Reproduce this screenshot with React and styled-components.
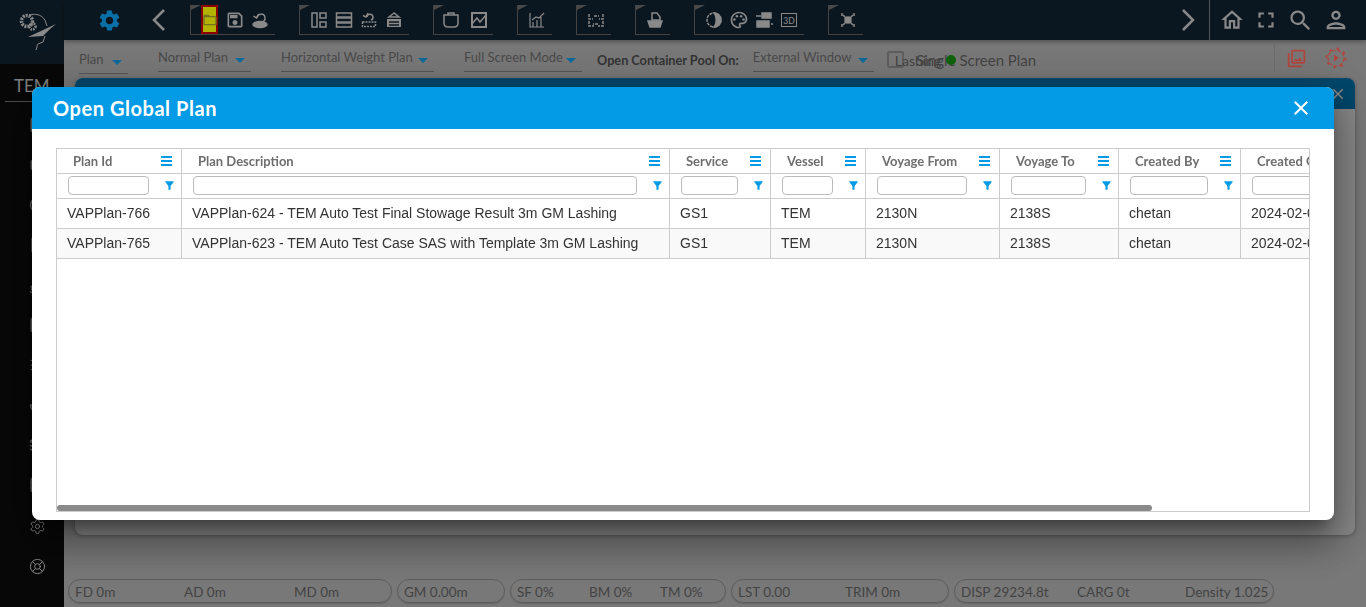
import styled, { createGlobalStyle } from "styled-components";
import {
  MdSettings, MdFolderOpen, MdOutlineSave,
  MdOutlineHome, MdOutlinePerson, MdSearch, MdFullscreen, MdOutlinePalette, MdClose, MdFilterAlt,
  MdOutlinePhotoLibrary,
} from "react-icons/md";
import { LuSettings, LuLifeBuoy, LuBox, LuLayers, LuAnchor, LuFile, LuShip, LuSquare, LuList, LuCircle, LuGrid3X3 } from "react-icons/lu";

const GlobalStyle = createGlobalStyle`
  html, body { margin: 0; height: 100%; overflow: hidden; background: #acacac; }
  body { font-family: Lato, "Liberation Sans", sans-serif; color: #666; }
  * { box-sizing: border-box; }
`;

const Svg = ({ children, fill = "none" }) => (
  <svg width="20" height="20" viewBox="0 0 20 20" fill={fill} stroke="currentColor" strokeWidth="1.5">{children}</svg>
);

const Logo = () => (
  <svg width="64" height="64" viewBox="0 0 64 64" fill="none" stroke="#c5c5c5" strokeWidth="1">
    <circle cx="27" cy="21" r="5.500" strokeWidth="3.500" strokeDasharray="2 1" />
    <circle cx="32.500" cy="26.500" r="3" strokeWidth="2.500" strokeDasharray="1.500 1" />
    <path d="M29 15c7-2 15 0 17 8l1 3" />
    <path d="M28 37l28-13-6 5-7 7-15 1z" fill="#c5c5c5" stroke="none" />
    <path d="M45 36l-2 6-5 2c-1 0-1 2-1 3l-1 3" />
  </svg>
);

const Chevron = ({ right }) => (
  <svg width="14" height="22" viewBox="0 0 14 22" fill="none" stroke="currentColor" strokeWidth="2.500">
    <path d={right ? "M2 1l10 10L2 21" : "M12 1L2 11l10 10"} />
  </svg>
);

const ShipUndo = () => (
  <Svg><path d="M7 8a4 4 0 1 1 5 4" /><path d="M9 4L6.500 8 3.500 6" /><ellipse cx="10" cy="14.500" rx="7" ry="3" fill="currentColor" /></Svg>
);
const Panes = () => (
  <Svg><rect x="3" y="3" width="5" height="14" /><rect x="11" y="3" width="6" height="5" /><rect x="11" y="12" width="6" height="5" /></Svg>
);
const Rows = () => (
  <Svg><rect x="2.500" y="3" width="15" height="4" /><rect x="2.500" y="8" width="15" height="4" /><rect x="2.500" y="13" width="15" height="4" /></Svg>
);
const Unload = () => (
  <Svg><path d="M8 7a3 3 0 1 1 4 3" /><path d="M9 3L7 7 4 5.500" /><rect x="3.500" y="12" width="13" height="4.500" strokeDasharray="2 1" /></Svg>
);
const Crane = () => (
  <Svg><path d="M10 3L5 7h10z" /><rect x="3" y="9" width="14" height="8" fill="currentColor" stroke="none" /><path d="M5 12h10M5 15h10" stroke="#11212e" /></Svg>
);
const Tub = () => (
  <Svg><path d="M3 5h14v8c0 3-2 4-4 4H7c-2 0-4-1-4-4z" /><path d="M7 5V3h6v2" /></Svg>
);
const PhotoChart = () => (
  <Svg><rect x="3" y="3" width="14" height="14" strokeWidth="2" /><path d="M3 14l5-6 3 4 6-7" /></Svg>
);
const Bars = () => (
  <Svg><path d="M3 3v14h14M6 17v-5M10 17v-7M14 17V7M5 10l4-3 3 1 5-5" strokeWidth="1.200" /></Svg>
);
const Swap = () => (
  <Svg><path d="M3 4v5h4M3 11v5h5M17 4v5h-4M17 11v5h-5M8 6h5M12 14H7" strokeDasharray="3 1" /></Svg>
);
const Kettle = () => (
  <Svg><path d="M7 3h5l3 4v3H7z" /><path d="M3 11h14l-2 6H5z" fill="currentColor" /></Svg>
);
const Contrast = () => (
  <Svg><circle cx="10" cy="10" r="7" strokeDasharray="3 1" /><path d="M10 3a7 7 0 0 1 0 14c3-3 3-11 0-14z" fill="currentColor" /></Svg>
);
const Blocks = () => (
  <Svg><rect x="8" y="3" width="9" height="5" fill="currentColor" /><rect x="3" y="11" width="12" height="6" fill="currentColor" /><path d="M2 6h5M17 14h2" /></Svg>
);
const Box3d = () => (
  <svg width="20" height="20" viewBox="0 0 20 20">
    <rect x="2.500" y="3.500" width="15" height="13" fill="none" stroke="currentColor" />
    <text x="10" y="13.500" fontSize="8.500" fontFamily="Lato" textAnchor="middle" fill="currentColor">3D</text>
  </svg>
);
const Cross = () => (
  <Svg><path d="M5 5l10 10M15 5L5 15" strokeWidth="1.500" /><circle cx="10" cy="10" r="3" fill="currentColor" /><path d="M4 3v3M16 3v3M4 14v3M16 14v3" /></Svg>
);
const PlayGear = () => (
  <svg width="22" height="22" viewBox="0 0 22 22" fill="none" stroke="currentColor" strokeWidth="1.200">
    <circle cx="11" cy="11" r="8" strokeDasharray="4 1.500" />
    <circle cx="11" cy="11" r="9.500" strokeDasharray="2.500 5" strokeWidth="2" />
    <path d="M9 7.500l5 3.500-5 3.500z" fill="currentColor" stroke="none" />
  </svg>
);

const toolGroups = [
  { key: "plan", items: [<MdFolderOpen key="a" size={16} />, <MdOutlineSave key="b" size={20} />, <ShipUndo key="c" />], active: 0 },
  { key: "layout", items: [<Panes key="a" />, <Rows key="b" />, <Unload key="c" />, <Crane key="d" />] },
  { key: "view", items: [<Tub key="a" />, <PhotoChart key="b" />], wide: true },
  { key: "chart", items: [<Bars key="a" />] },
  { key: "swap", items: [<Swap key="a" />] },
  { key: "bag", items: [<Kettle key="a" />] },
  { key: "color", items: [<Contrast key="a" />, <MdOutlinePalette key="b" size={20} />, <Blocks key="c" />, <Box3d key="d" />] },
  { key: "cross", items: [<Cross key="a" />] },
];

const sideIcons = [LuSquare, LuBox, LuCircle, LuFile, LuShip, LuSquare, LuList, LuAnchor, LuLayers, LuGrid3X3];

const columns = [
  { label: "Plan Id", width: 125 },
  { label: "Plan Description", width: 488 },
  { label: "Service", width: 101 },
  { label: "Vessel", width: 95 },
  { label: "Voyage From", width: 134 },
  { label: "Voyage To", width: 119 },
  { label: "Created By", width: 122 },
  { label: "Created On", width: 200 },
];

const rows = [
  ["VAPPlan-766", "VAPPlan-624 - TEM Auto Test Final Stowage Result 3m GM Lashing", "GS1", "TEM", "2130N", "2138S", "chetan", "2024-02-06 10:21"],
  ["VAPPlan-765", "VAPPlan-623 - TEM Auto Test Case SAS with Template 3m GM Lashing", "GS1", "TEM", "2130N", "2138S", "chetan", "2024-02-06 10:02"],
];

const pills = [
  { width: 324, cells: [["FD 0m", 109], ["AD 0m", 110], ["MD 0m", 90]] },
  { width: 108, cells: [["GM 0.00m", 90]] },
  { width: 216, cells: [["SF 0%", 72], ["BM 0%", 71], ["TM 0%", 60]] },
  { width: 218, cells: [["LST 0.00", 107], ["TRIM 0m", 90]] },
  { width: 320, cells: [["DISP 29234.8t", 116], ["CARG 0t", 108], ["Density 1.025", 90]] },
];

export default function App() {
  return (
    <>
      <GlobalStyle />
      <Page>
        <Sidebar>
          <LogoCell><Logo /></LogoCell>
          <VesselName>TEM</VesselName>
          <SideList>
            {sideIcons.map((Icon, i) => (
              <SideItem key={i}><Icon size={18} /></SideItem>
            ))}
          </SideList>
          <SideBottom>
            <SideItem $bright><LuSettings size={17} strokeWidth={1.4} /></SideItem>
            <SideItem $bright><LuLifeBuoy size={17} strokeWidth={1.4} /></SideItem>
          </SideBottom>
        </Sidebar>

        <Main>
          <TopBar>
            <GearCell><MdSettings size={25} /></GearCell>
            <ArrowCell><Chevron /></ArrowCell>
            <Groups>
              {toolGroups.map((g) => (
                <ToolGroup key={g.key} $wide={g.wide}>
                  {g.items.map((icon, i) => (
                    <ToolCell key={i} $active={g.active === i}>{icon}</ToolCell>
                  ))}
                </ToolGroup>
              ))}
            </Groups>
            <TopRight>
              <ArrowCell><Chevron right /></ArrowCell>
              <UserTools>
                <MdOutlineHome size={26} />
                <MdFullscreen size={26} />
                <MdSearch size={27} />
                <MdOutlinePerson size={28} />
              </UserTools>
            </TopRight>
          </TopBar>

          <SubBar>
            <Select $w={49} $gap={30} $low>Plan</Select>
            <Select $w={93} $gap={30}>Normal Plan</Select>
            <Select $w={153} $gap={30}>Horizontal Weight Plan</Select>
            <Select $w={118} $gap={15}>Full Screen Mode</Select>
            <PoolLabel>Open Container Pool On:</PoolLabel>
            <Select $w={121} $gap={13}>External Window</Select>
            <Check />
            <LashingLabel>Lashing</LashingLabel>
            <SingleLabel>Single Screen Plan<Dot /></SingleLabel>
            <SubActions>
              <MdOutlinePhotoLibrary size={21} />
              <PlayGear />
            </SubActions>
          </SubBar>

          <WorkArea>
            <Panel>
              <PanelHead><MdClose size={18} /></PanelHead>
            </Panel>
          </WorkArea>

          <Footer>
            {pills.map((p) => (
              <Pill key={p.cells[0][0]} $w={p.width}>
                {p.cells.map(([text, w]) => (
                  <PillCell key={text} $w={w}>{text}</PillCell>
                ))}
              </Pill>
            ))}
          </Footer>
        </Main>

        <Backdrop>
          <Dialog>
            <DialogHead>
              <DialogTitle>Open Global Plan</DialogTitle>
              <CloseBtn><MdClose size={24} /></CloseBtn>
            </DialogHead>
            <DialogBody>
              <GridWrap>
                <Table>
                  <colgroup>
                    {columns.map((c) => <col key={c.label} width={c.width} />)}
                  </colgroup>
                  <thead>
                    <tr>
                      {columns.map((c) => (
                        <HeadCell key={c.label}>
                          <HeadInner>
                            <span>{c.label}</span>
                            <MenuMark />
                          </HeadInner>
                        </HeadCell>
                      ))}
                    </tr>
                    <tr>
                      {columns.map((c) => (
                        <FilterCell key={c.label}>
                          <FilterInner>
                            <FilterInput />
                            <MdFilterAlt size={13} />
                          </FilterInner>
                        </FilterCell>
                      ))}
                    </tr>
                  </thead>
                  <tbody>
                    {rows.map((row, r) => (
                      <BodyRow key={row[0]} $odd={r % 2 === 1}>
                        {row.map((v, i) => <td key={i}>{v}</td>)}
                      </BodyRow>
                    ))}
                  </tbody>
                </Table>
                <Thumb />
              </GridWrap>
            </DialogBody>
          </Dialog>
        </Backdrop>
      </Page>
    </>
  );
}

function Select({ children, $w, $gap, $low }) {
  return (
    <SelectBox $w={$w} $gap={$gap} $low={$low}>
      <span>{children}</span>
      <Caret />
    </SelectBox>
  );
}

const Page = styled.div`
  display: flex;
  height: 100vh;
`;

const Sidebar = styled.aside`
  width: 64px;
  flex: none;
  display: flex;
  flex-direction: column;
  background: #0b0b0b;
`;

const LogoCell = styled.div`
  height: 64px;
  background: #11212e;
`;

const VesselName = styled.div`
  height: 38px;
  margin: 0 2px 0 5px;
  padding-left: 9px;
  line-height: 44px;
  font-size: 17px;
  color: #b8b8b8;
  border-bottom: 1px solid #707070;
`;

const SideList = styled.div`
  display: flex;
  flex-direction: column;
  padding-top: 3px;
`;

const SideItem = styled.div`
  height: 40px;
  padding-left: 29px;
  display: flex;
  align-items: center;
  color: ${(p) => (p.$bright ? "#c5c5c5" : "#909090")};
`;

const SideBottom = styled.div`
  margin-top: auto;
  padding-bottom: 21px;
`;

const Main = styled.div`
  flex: 1;
  min-width: 0;
  display: flex;
  flex-direction: column;
`;

const TopBar = styled.header`
  height: 40px;
  flex: none;
  display: flex;
  background: #11212e;
  color: #c5c5c5;
  box-shadow: 0 2px 4px rgba(0, 0, 0, 0.3);
  z-index: 1;
`;

const GearCell = styled.div`
  width: 32px;
  margin-left: 29px;
  margin-right: 17px;
  display: flex;
  align-items: center;
  justify-content: center;
  color: #109ff0;
`;

const ArrowCell = styled.div`
  width: 34px;
  display: flex;
  align-items: center;
  justify-content: center;
  color: #c5c5c5;
`;

const Groups = styled.div`
  display: flex;
  gap: 24px;
  margin-left: 14px;
  padding-top: 5px;
`;

const ToolGroup = styled.div`
  height: 30px;
  display: flex;
  gap: ${(p) => (p.$wide ? "3px" : "0")};
  padding-left: ${(p) => (p.$wide ? "4px" : "6px")};
  padding-right: ${(p) => (p.$wide ? "2px" : "3px")};
  border-left: 1px solid #616161;
  border-bottom: 1px solid #616161;
  position: relative;

  &::before {
    content: "";
    position: absolute;
    left: 0;
    top: 0;
    border-top: 5px solid #6a6a6a;
    border-right: 10px solid transparent;
  }
`;

const ToolCell = styled.div`
  width: 25px;
  height: 29px;
  display: flex;
  align-items: center;
  justify-content: center;
  color: #c5c5c5;
  position: relative;

  ${(p) => p.$active && `
    color: #a8a430;
    z-index: 0;
    &::after {
      content: "";
      position: absolute;
      inset: 0 4px;
      background: #ffff00;
      border: 2px solid #c80000;
      z-index: -1;
    }
  `}
`;

const TopRight = styled.div`
  margin-left: auto;
  display: flex;
`;

const UserTools = styled.div`
  width: 157px;
  margin-left: 4px;
  padding: 0 16px 0 9px;
  display: flex;
  align-items: center;
  justify-content: space-between;
  border-left: 1px solid #717b84;
  color: #c5c5c5;
`;

const SubBar = styled.div`
  height: 38px;
  flex: none;
  display: flex;
  align-items: flex-start;
  padding: 8px 0 0 15px;
  position: relative;
`;

const SelectBox = styled.div`
  width: ${(p) => p.$w}px;
  height: 24px;
  margin-top: ${(p) => (p.$low ? "2px" : "0")};
  margin-right: ${(p) => p.$gap}px;
  padding: 1px 6px 0 0;
  display: flex;
  align-items: flex-start;
  justify-content: space-between;
  white-space: nowrap;
  font-size: 13px;
  color: #6a6a6a;
  border-bottom: 1px solid #7a7a7a;
`;

const Caret = styled.i`
  margin-top: 9px;
  border-left: 5.500px solid transparent;
  border-right: 5.500px solid transparent;
  border-top: 5px solid #0f98de;
`;

const PoolLabel = styled.label`
  margin: 4px 14px 0 0;
  font-size: 12.700px;
  font-weight: 700;
  color: #4a4a4a;
`;

const Check = styled.div`
  width: 17px;
  height: 17px;
  margin-top: 3px;
  border: 2px solid #888;
  border-radius: 2px;
`;

const LashingLabel = styled.span`
  margin: 4px 0 0 -9px;
  font-size: 14px;
  color: #616161;
`;

const SingleLabel = styled.span`
  margin: 3px 0 0 -25px;
  position: relative;
  font-size: 15px;
  color: #616161;
`;

const Dot = styled.i`
  position: absolute;
  left: 30px;
  top: 4px;
  width: 10px;
  height: 10px;
  border-radius: 50%;
  background: #118f11;
`;

const SubActions = styled.div`
  margin-left: auto;
  width: 92px;
  height: 28px;
  margin-top: -4px;
  padding: 0 19px 0 11px;
  display: flex;
  align-items: center;
  justify-content: space-between;
  border-left: 1px solid #9a9a9a;
  color: #ff6458;
`;

const WorkArea = styled.div`
  flex: 1;
  min-height: 0;
  padding: 0 11px 12px;
`;

const Panel = styled.section`
  height: 100%;
  background: #c5c5c5;
  border-radius: 8px;
  box-shadow: 0 1px 4px rgba(0, 0, 0, 0.3);
  overflow: hidden;
`;

const PanelHead = styled.div`
  height: 31px;
  padding-right: 8px;
  display: flex;
  align-items: center;
  justify-content: flex-end;
  background: #00679a;
  color: #c5c5c5;
`;

const Footer = styled.footer`
  height: 60px;
  flex: none;
  display: flex;
  gap: 5px;
  padding: 32px 0 0 4px;
`;

const Pill = styled.div`
  width: ${(p) => p.$w}px;
  height: 24px;
  padding: 1px 0 0 6px;
  display: flex;
  align-items: center;
  font-size: 13.500px;
  color: #616161;
  border: 1px solid #858585;
  border-radius: 12px;
  box-shadow: 0 1px 1px rgba(0, 0, 0, 0.15);
`;

const PillCell = styled.span`
  width: ${(p) => p.$w}px;
  flex: none;
  white-space: nowrap;
`;

const Backdrop = styled.div`
  position: fixed;
  inset: 0;
  z-index: 10;
  display: flex;
  align-items: center;
  justify-content: center;
  background: rgba(0, 0, 0, 0.3);
`;

const Dialog = styled.div`
  width: 1302px;
  height: 433px;
  display: flex;
  flex-direction: column;
  background: #fff;
  border-radius: 8px;
  overflow: hidden;
  box-shadow: 0 11px 15px -7px rgba(0, 0, 0, 0.36), 0 24px 38px 3px rgba(0, 0, 0, 0.25), 0 9px 46px 8px rgba(0, 0, 0, 0.22);
`;

const DialogHead = styled.div`
  height: 42px;
  flex: none;
  padding: 0 21px;
  display: flex;
  align-items: center;
  justify-content: space-between;
  background: #039be5;
  color: #fff;
`;

const DialogTitle = styled.h2`
  margin: 0;
  font-size: 20px;
  letter-spacing: 0.55px;
  font-weight: 700;
`;

const CloseBtn = styled.div`
  display: flex;
`;

const DialogBody = styled.div`
  flex: 1;
  padding: 19px 24px 8px;
`;

const GridWrap = styled.div`
  height: 100%;
  position: relative;
  overflow: hidden;
  border: 1px solid #ccc;
`;

const Table = styled.table`
  width: 1384px;
  table-layout: fixed;
  border-collapse: separate;
  border-spacing: 0;
  font-family: "Liberation Sans", Arial, sans-serif;
  font-size: 14px;
  color: #333;
`;

const HeadCell = styled.th`
  height: 25px;
  padding: 0 9px 0 16px;
  border-right: 1px solid #ccc;
  border-bottom: 1px solid #ccc;
  font-family: Lato, sans-serif;
  font-size: 13px;
  font-weight: 700;
  color: #6e6e6e;
  text-align: left;
`;

const HeadInner = styled.div`
  display: flex;
  align-items: center;
  justify-content: space-between;
`;

const MenuMark = styled.i`
  width: 11px;
  height: 10px;
  border-top: 2px solid #039be5;
  border-bottom: 2px solid #039be5;
  background: linear-gradient(#039be5, #039be5) center / 100% 2px no-repeat;
`;

const FilterCell = styled.th`
  height: 25px;
  padding: 0 5px 1px 11px;
  border-right: 1px solid #ccc;
  border-bottom: 1px solid #ccc;
`;

const FilterInner = styled.div`
  display: flex;
  align-items: center;
  justify-content: space-between;
  gap: 14px;
  color: #039be5;
`;

const FilterInput = styled.input`
  flex: 1;
  min-width: 0;
  height: 19px;
  padding: 0;
  border: 1px solid #bbb;
  border-radius: 4px;
  background: #fff;
`;

const BodyRow = styled.tr`
  background: ${(p) => (p.$odd ? "#f9f9f9" : "#fff")};

  td {
    height: 30px;
    padding: 0 10px 2px;
    border-right: 1px solid #ccc;
    border-bottom: 1px solid #ccc;
    white-space: nowrap;
    overflow: hidden;
  }
`;

const Thumb = styled.div`
  position: absolute;
  left: 0;
  bottom: 0;
  width: 1095px;
  height: 6px;
  background: #8a8a8a;
  border-radius: 3px;
`;
